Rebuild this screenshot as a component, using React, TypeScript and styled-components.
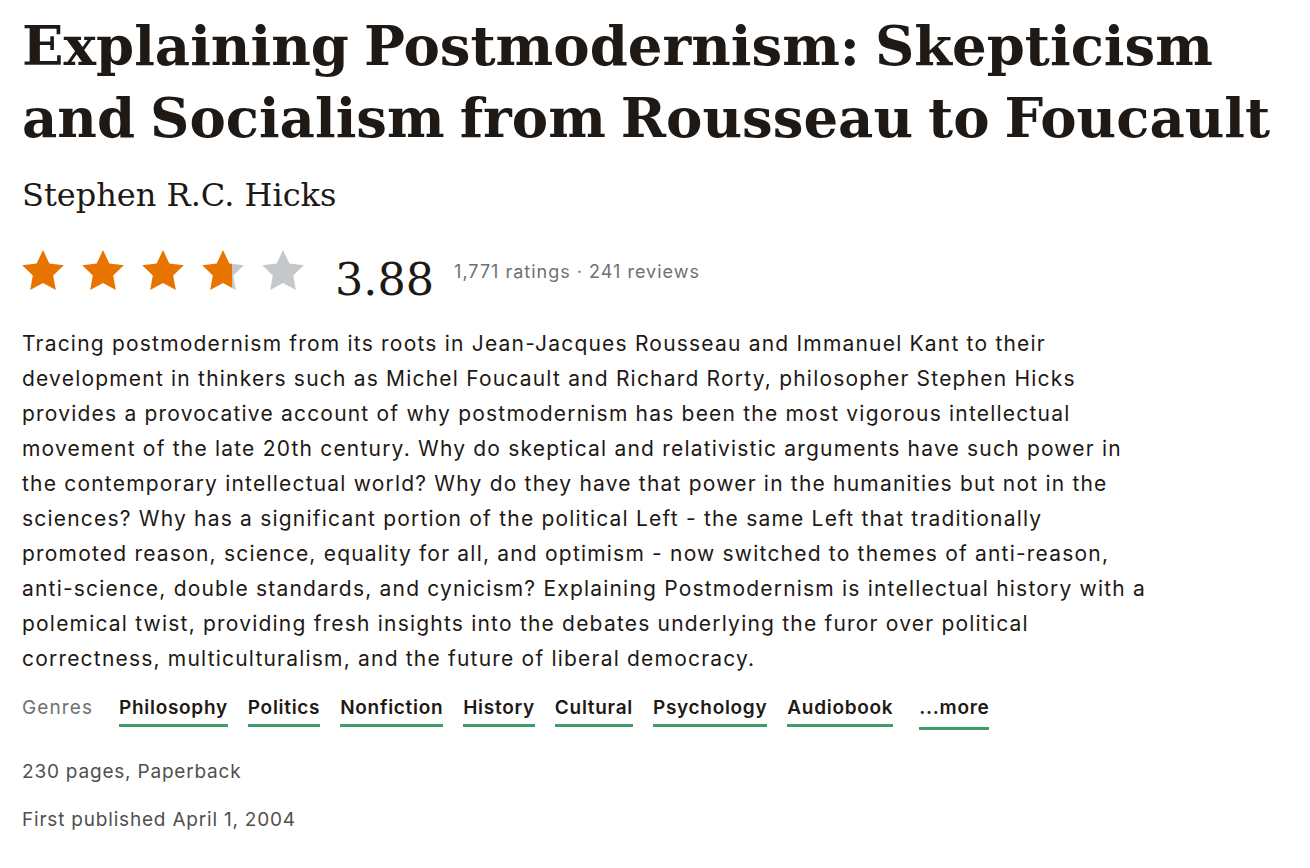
import React from "react";
import styled, { createGlobalStyle } from "styled-components";

const Global = createGlobalStyle`
  html, body { margin: 0; padding: 0; background: #ffffff; }
  body { font-family: "Inter", "Liberation Sans", sans-serif; color: #1e1915; }
`;

const Page = styled.main`
  padding: 10px 0 0 22px;
  display: flex;
  flex-direction: column;
  align-items: flex-start;
`;

const Title = styled.h1`
  margin: 0;
  font-family: "DejaVu Serif", "Liberation Serif", serif;
  font-weight: 700;
  font-size: 54.5px;
  line-height: 72px;
  word-spacing: -4px;
  color: #1e1915;
  max-width: 1286px;
`;

const Author = styled.h2`
  margin: 21px 0 0;
  font-family: "DejaVu Serif", "Liberation Serif", serif;
  font-weight: 400;
  font-size: 32px;
  line-height: 40px;
  color: #1e1915;
`;

const RatingRow = styled.div`
  display: flex;
  align-items: flex-start;
  margin-top: 35px;
`;

const Stars = styled.div`
  display: flex;
  gap: 18px;
`;

const RatingValue = styled.span`
  font-family: "DejaVu Serif", "Liberation Serif", serif;
  font-size: 44.5px;
  line-height: 44px;
  margin: 8px 0 0 31px;
  color: #1e1915;
`;

const RatingMeta = styled.span`
  font-size: 18px;
  line-height: 24px;
  letter-spacing: 1px;
  color: #707070;
  margin: 10px 0 0 20px;
`;

const Description = styled.p`
  margin: 24px 0 0;
  font-size: 21px;
  line-height: 35px;
  letter-spacing: 1.2px;
  max-width: 1130px;
  color: #1e1915;
`;

const GenreRow = styled.div`
  display: flex;
  align-items: flex-start;
  gap: 20px;
  margin-top: 20px;
`;

const GenreLabel = styled.span`
  font-size: 19px;
  line-height: 24px;
  letter-spacing: 1.1px;
  color: #707070;
  margin-right: 6px;
`;

const GenreLink = styled.a<{ $more?: boolean }>`
  font-size: 19px;
  line-height: 24px;
  letter-spacing: 0.7px;
  font-weight: 600;
  color: #1e1915;
  text-decoration: none;
  padding-bottom: ${(p) => (p.$more ? "7px" : "4px")};
  border-bottom: 3px solid #409d69;
  margin-left: ${(p) => (p.$more ? "6px" : "0")};
`;

const Detail = styled.p<{ $first?: boolean }>`
  margin: ${(p) => (p.$first ? "28px" : "20px")} 0 0;
  font-size: 19px;
  line-height: 28px;
  letter-spacing: 0.8px;
  color: #505050;
`;

const STAR = "M12 1.8l3.1 6.6 7.1.9-5.2 5 1.3 7.1L12 18l-6.3 3.4 1.3-7.1-5.2-5 7.1-.9z";

function Star({ fill, id }: { fill: number; id: string }) {
  return (
    <svg width="42" height="40" viewBox="1.8 1.8 20.4 19.6" aria-hidden>
      <defs>
        <linearGradient id={id} x1="0" x2="1" y1="0" y2="0">
          <stop offset={`${fill * 100}%`} stopColor="#e87400" />
          <stop offset={`${fill * 100}%`} stopColor="#c5c8cb" />
        </linearGradient>
      </defs>
      <path d={STAR} fill={`url(#${id})`} />
    </svg>
  );
}

const genres = ["Philosophy", "Politics", "Nonfiction", "History", "Cultural", "Psychology", "Audiobook"];

export default function App() {
  const fills = [1, 1, 1, 0.71, 0];
  return (
    <>
      <Global />
      <Page>
        <Title>Explaining Postmodernism: Skepticism and Socialism from Rousseau to Foucault</Title>
        <Author>Stephen R.C. Hicks</Author>
        <RatingRow>
          <Stars>
            {fills.map((f, i) => (
              <Star key={i} fill={f} id={`star-${i}`} />
            ))}
          </Stars>
          <RatingValue>3.88</RatingValue>
          <RatingMeta>1,771 ratings · 241 reviews</RatingMeta>
        </RatingRow>
        <Description>
          Tracing postmodernism from its roots in Jean-Jacques Rousseau and Immanuel Kant to their development in
          thinkers such as Michel Foucault and Richard Rorty, philosopher Stephen Hicks provides a provocative account
          of why postmodernism has been the most vigorous intellectual movement of the late 20th century. Why do
          skeptical and relativistic arguments have such power in the contemporary intellectual world? Why do they have
          that power in the humanities but not in the sciences? Why has a significant portion of the political Left -
          the same Left that traditionally promoted reason, science, equality for all, and optimism - now switched to
          themes of anti-reason, anti-science, double standards, and cynicism? Explaining Postmodernism is intellectual
          history with a polemical twist, providing fresh insights into the debates underlying the furor over political
          correctness, multiculturalism, and the future of liberal democracy.
        </Description>
        <GenreRow>
          <GenreLabel>Genres</GenreLabel>
          {genres.map((g) => (
            <GenreLink key={g} href="#">
              {g}
            </GenreLink>
          ))}
          <GenreLink $more href="#">
            ...more
          </GenreLink>
        </GenreRow>
        <Detail $first>230 pages, Paperback</Detail>
        <Detail>First published April 1, 2004</Detail>
      </Page>
    </>
  );
}
